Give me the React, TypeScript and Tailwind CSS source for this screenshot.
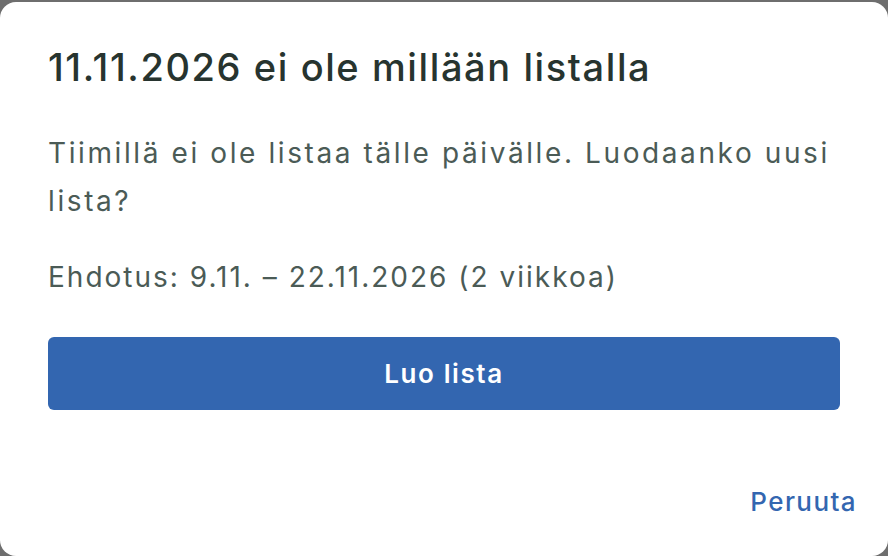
export default function App() {
  return (
    <div className="w-[888px] h-[556px] bg-[#6e6e6e] overflow-hidden pt-[2px]" style={{ fontFamily: 'Inter, "Noto Sans", sans-serif' }}>
      <div className="h-[554px] bg-white rounded-[16px] flex flex-col px-[48px] pt-[41px]">
        <h1 className="text-[38px] leading-[48px] font-medium tracking-[1.6px] text-[#27342f] whitespace-nowrap">11.11.2026 ei ole millään listalla</h1>
        <p className="mt-[38px] text-[28px] leading-[48px] tracking-[2.6px] text-[#4b5b56]">Tiimillä ei ole listaa tälle päivälle. Luodaanko uusi lista?</p>
        <p className="mt-[28px] text-[28px] leading-[48px] tracking-[2px] text-[#4b5b56]">Ehdotus: 9.11. – 22.11.2026 (2 viikkoa)</p>
        <button className="mt-[36px] h-[73px] rounded-[6px] bg-[#3366b0] text-white text-[26px] font-semibold tracking-[1.6px] flex items-center justify-center">Luo lista</button>
        <div className="flex-1" />
        <div className="flex justify-end -mr-[17px] pb-[36px]">
          <button className="text-[26px] leading-[36px] font-medium tracking-[1.4px] text-[#3366b0]">Peruuta</button>
        </div>
      </div>
    </div>
  );
}
